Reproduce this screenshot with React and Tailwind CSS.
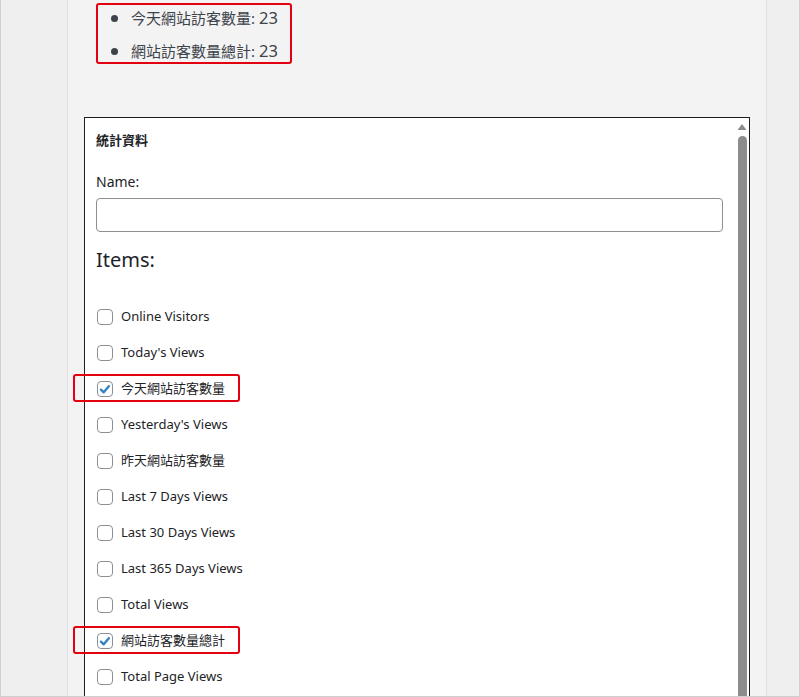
import React from 'react';

const items = [
    { label: 'Online Visitors' },
    { label: "Today's Views" },
    { label: '今天網站訪客數量', checked: true },
    { label: "Yesterday's Views" },
    { label: '昨天網站訪客數量' },
    { label: 'Last 7 Days Views' },
    { label: 'Last 30 Days Views' },
    { label: 'Last 365 Days Views' },
    { label: 'Total Views' },
    { label: '網站訪客數量總計', checked: true },
    { label: 'Total Page Views' },
];

const font = { fontFamily: '"Noto Sans", "Noto Sans CJK TC", sans-serif' };

const Checkbox = ({ checked }) => (
    <span className="w-4 h-4 shrink-0 rounded-[4px] border border-[#8c8f94] bg-white flex items-center justify-center">
        {checked && (
            <svg viewBox="0 0 16 16" className="w-[15px] h-[15px]">
                <path d="M3.4 8.2 L6.5 11.2 L12.4 4.2" fill="none" stroke="#3582c4" strokeWidth="2.8" strokeLinecap="round" strokeLinejoin="round" />
            </svg>
        )}
    </span>
);

export default function App() {
    return (
        <div className="w-[800px] h-[697px] overflow-hidden flex border-l border-r border-b border-[#cfcfcf] text-[#1d2327]" style={font}>
            <div className="w-[67px] shrink-0 bg-[#efefef] border-r border-[#dedede]" />

            <div className="flex-1 bg-[#f3f3f3] pl-[16px] pr-[16px]">
                {/* result list */}
                <div className="mt-[3px] ml-[12px] w-[196px] h-[61px] border-2 border-[#e3000f] rounded-[3px]">
                    <ul className="text-[15px] text-[#3c434a] -mt-[3px]">
                        {[['今天網站訪客數量', '23'], ['網站訪客數量總計', '23']].map(([t, n]) => (
                            <li key={t} className="flex items-center h-[33px]">
                                <span className="w-[7px] h-[7px] rounded-full bg-[#3c434a] ml-[13px] mr-[13px]" />
                                <span>{t}: <span className="text-[16.5px]">{n}</span></span>
                            </li>
                        ))}
                    </ul>
                </div>

                {/* widget form */}
                <div className="mt-[53px] w-[666px] h-[640px] bg-white border border-[#1e1e1e] flex">
                    <div className="flex-1 pl-[11px] pr-[14px] pt-[10px]">
                        <p className="text-[13px] font-semibold leading-[24px]">統計資料</p>
                        <p className="mt-[20px] text-[14px] leading-[20px]">Name:</p>
                        <div className="mt-[6px] h-[34px] w-full rounded-[4px] border border-[#8c8f94] bg-white" />
                        <h3 className="mt-[14px] text-[20px] leading-[28px]">Items:</h3>
                        <div className="mt-[25px]">
                            {items.map(it => (
                                <div key={it.label} className="relative h-[36px] flex items-center gap-[8px] pl-[1px] text-[13px]">
                                    {it.checked && (
                                        <span className="absolute left-[-23px] top-[3px] w-[167px] h-[28px] border-2 border-[#e3000f] rounded-[3px]" />
                                    )}
                                    <Checkbox checked={it.checked} />
                                    <span>{it.label}</span>
                                </div>
                            ))}
                        </div>
                    </div>
                    <div className="w-[10px] mr-[2px] flex flex-col items-center pt-[5px]">
                        <svg viewBox="0 0 10 8" className="w-[10px] h-[8px]">
                            <path d="M5 1 L9.5 7 L0.5 7 Z" fill="#8c8c8c" />
                        </svg>
                        <div className="mt-[5px] flex-1 w-[9px] bg-[#8c8c8c] rounded-t-[5px]" />
                    </div>
                </div>
            </div>

            <div className="w-[33px] shrink-0 bg-[#efefef] border-l border-[#dedede]" />
        </div>
    );
}
